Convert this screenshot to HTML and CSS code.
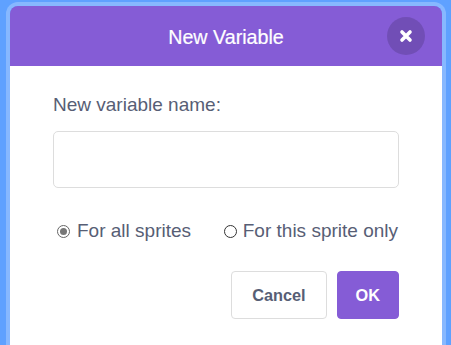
FILE: index.html
```html
<!DOCTYPE html>
<html lang="en">
<head>
<meta charset="utf-8">
<title>New Variable</title>
<link rel="stylesheet" href="styles.css">
</head>
<body>
<div class="overlay">
  <div class="modal">
    <div class="header">
      <div class="spacer"></div>
      <div class="title">New Variable</div>
      <div class="close-wrap">
        <button class="close" aria-label="Close">
          <svg width="14" height="14" viewBox="0 0 14 14">
            <path d="M3 3 L11 11 M11 3 L3 11" stroke="#fff" stroke-width="3.6" stroke-linecap="round" fill="none"/>
          </svg>
        </button>
      </div>
    </div>
    <div class="body">
      <div class="label">New variable name:</div>
      <input class="name-input" type="text">
      <div class="options">
        <label class="option"><span class="radio checked"></span>For all sprites</label>
        <label class="option"><span class="radio"></span>For this sprite only</label>
      </div>
      <div class="buttons">
        <button class="btn cancel">Cancel</button>
        <button class="btn ok">OK</button>
      </div>
    </div>
  </div>
</div>
</body>
</html>
```
FILE: styles.css
```css
html, body {
  margin: 0;
  padding: 0;
  height: 100%;
  overflow: hidden;
}
body {
  background: #5fa1ff;
  font-family: "Liberation Sans", Arial, sans-serif;
}
.overlay {
  padding: 2px 5px 0 6px;
}
.modal {
  border: 4px solid rgba(255, 255, 255, 0.25);
  border-bottom-width: 0;
  border-radius: 12px 12px 0 0;
  overflow: hidden;
  width: 432px;
}
.header {
  height: 60px;
  background: #855cd6;
  display: grid;
  grid-template-columns: 1fr auto 1fr;
  align-items: center;
}
.title {
  color: #fff;
  font-size: 19.7px;
  line-height: 22px;
  padding-top: 1px;
  -webkit-text-stroke: 0.2px #fff;
}
.close-wrap {
  display: flex;
  justify-content: flex-end;
  padding-right: 17px;
  padding-bottom: 1px;
}
.close {
  width: 38px;
  height: 38px;
  border-radius: 50%;
  border: none;
  padding: 0;
  background: rgba(0, 0, 0, 0.15);
  display: flex;
  align-items: center;
  justify-content: center;
}
.body {
  background: #fff;
  padding: 28px 43px 26px 43px;
}
.label {
  color: #575e75;
  font-size: 19px;
  line-height: 22px;
}
.name-input {
  display: block;
  box-sizing: border-box;
  width: 100%;
  height: 57px;
  margin-top: 15px;
  border: 1px solid #dddddd;
  border-radius: 5px;
  background: #fff;
  outline: none;
}
.options {
  display: flex;
  justify-content: space-between;
  margin-top: 32px;
  padding-right: 1px;
}
.option {
  display: flex;
  align-items: center;
  color: #575e75;
  font-size: 19px;
  line-height: 22px;
}
.radio {
  box-sizing: border-box;
  width: 13px;
  height: 13px;
  border-radius: 50%;
  border: 1px solid #333;
  background: #fff;
  margin: 1px 7px 0 4px;
  display: flex;
  align-items: center;
  justify-content: center;
}
.option + .option .radio {
  margin-left: 0;
  margin-right: 6px;
}
.radio.checked {
  border-color: #666;
}
.radio.checked::after {
  content: "";
  width: 7px;
  height: 7px;
  border-radius: 50%;
  background: #777;
}
.buttons {
  display: flex;
  justify-content: flex-end;
  gap: 10px;
  margin-top: 29px;
}
.btn {
  height: 48px;
  border-radius: 4px;
  font-family: "Liberation Sans", Arial, sans-serif;
  font-weight: bold;
  font-size: 16.3px;
  border: 1px solid #dddddd;
}
.cancel {
  background: #fff;
  color: #575e75;
  padding: 0 20px;
}
.ok {
  background: #855cd6;
  border-color: #855cd6;
  color: #fff;
  padding: 0 18px;
}
```
